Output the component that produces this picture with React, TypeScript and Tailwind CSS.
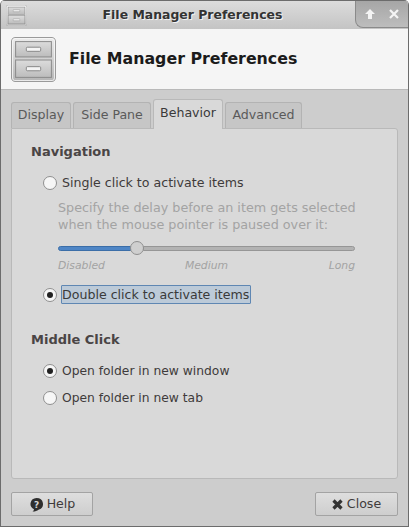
import React from "react";

type CabinetProps = { size: number };

// Filing cabinet icon, same drawing for title bar and header
const Cabinet = ({ size }: CabinetProps): JSX.Element => (
  <svg width={size} height={size} viewBox="0 0 44 44" className="block">
    <defs>
      <linearGradient id="body" x1="0" y1="0" x2="0" y2="1">
        <stop offset="0" stopColor="#ececec" />
        <stop offset="1" stopColor="#b5b5b5" />
      </linearGradient>
      <linearGradient id="drawer" x1="0" y1="0" x2="0" y2="1">
        <stop offset="0" stopColor="#dcdcdc" />
        <stop offset="1" stopColor="#bcbcbc" />
      </linearGradient>
    </defs>
    <rect x="0.5" y="0.5" width="43" height="43" rx="4" fill="url(#body)" stroke="#9a9a9a" />
    <rect x="1.5" y="1.5" width="41" height="41" rx="3" fill="none" stroke="#f8f8f8" strokeOpacity="0.8" />
    <rect x="4.5" y="4.5" width="35" height="15" fill="url(#drawer)" stroke="#8c8c8c" />
    <rect x="4.5" y="22.5" width="35" height="17" fill="url(#drawer)" stroke="#8c8c8c" />
    <rect x="15" y="10" width="14" height="4" rx="1" fill="#f4f4f4" stroke="#777" strokeWidth="0.8" />
    <rect x="15" y="29" width="14" height="4" rx="1" fill="#f4f4f4" stroke="#777" strokeWidth="0.8" />
  </svg>
);

const tabs = [
  { label: "Display", active: false, width: "w-[60px]" },
  { label: "Side Pane", active: false, width: "w-[78px]" },
  { label: "Behavior", active: true, width: "w-[70px]" },
  { label: "Advanced", active: false, width: "w-[77px]" },
];

type RadioProps = {
  label: string;
  checked?: boolean;
  focused?: boolean;
};

const Radio = ({ label, checked, focused }: RadioProps): JSX.Element => (
  <div className="flex h-[19px] items-center">
    <span className="flex h-[14px] w-[14px] items-center justify-center rounded-full border border-[#8f8f8f] bg-[#f6f6f6]">
      {checked && <span className="h-[6px] w-[6px] rounded-full bg-[#222]" />}
    </span>
    {focused ? (
      <span className="ml-[4px] flex h-[19px] items-center rounded-[1px] border border-[#5f87b3] bg-[#bccad8] pr-[1px] pt-px text-[#3a3a3a]">
        {label}
      </span>
    ) : (
      <span className="ml-[5px] pt-px text-[#3f3b3b]">{label}</span>
    )}
  </div>
);

const App = (): JSX.Element => {
  return (
    <div className="flex h-[527px] w-[409px] flex-col overflow-hidden rounded-t-[5px] border-x border-b border-[#6c6c6c] bg-[#cdcdcd] font-['DejaVu_Sans',sans-serif] text-[12.6px]">
      {/* Title bar */}
      <header className="flex h-[29px] shrink-0 items-center border-t border-[#6c6c6c] bg-gradient-to-b from-[#dcdcdc] to-[#c4c4c4]">
        <div className="ml-[5px] shrink-0">
          <Cabinet size={21} />
        </div>
        <h1 className="grow pl-[3px] text-center text-[12.45px] font-bold text-[#333] [text-shadow:1px_1px_0_#f2f2f2]">
          File Manager Preferences
        </h1>
        <div className="flex h-[27px] w-[53px] shrink-0 items-center justify-center gap-[14px] self-start rounded-bl-[8px] border-b border-l border-[#8a8a8a] bg-gradient-to-b from-[#a6a6a6] to-[#bdbdbd]">
          <svg width="10" height="10" viewBox="0 0 10 10" fill="#f4f4f4">
            <path d="M5 0 10 5H7V10H3V5H0Z" />
          </svg>
          <svg width="10" height="10" viewBox="0 0 10 10" stroke="#f4f4f4" strokeWidth="2.2">
            <path d="M1 1 9 9M9 1 1 9" />
          </svg>
        </div>
      </header>

      {/* Dialog header */}
      <div className="flex h-[61px] shrink-0 items-center border-b border-[#b9b9b9] bg-[#f5f5f5] pl-[10px]">
        <Cabinet size={45} />
        <span className="ml-[13px] text-[15.8px] font-bold text-[#1b1b1b]">File Manager Preferences</span>
      </div>

      {/* Notebook */}
      <main className="flex grow flex-col px-[10px] pt-[9px]">
        <div className="relative z-10 flex h-[29px] shrink-0 items-end gap-[2px]">
          {tabs.map((tab) => (
            <div
              key={tab.label}
              className={
                tab.active
                  ? `${tab.width} -mb-px flex h-[30px] items-center justify-center rounded-t-[3px] border-x border-t border-[#b9b9b9] bg-[#d9d9d9] pb-[3px] text-[#3a3a3a]`
                  : `${tab.width} flex h-[26px] items-center justify-center rounded-t-[3px] border-x border-t border-[#b3b3b3] bg-[#c6c6c6] text-[#5a5a5a]`
              }
            >
              {tab.label}
            </div>
          ))}
        </div>
        <section className="h-[351px] rounded-b-[3px] rounded-tr-[3px] border border-[#b9b9b9] bg-[#d9d9d9] pl-[19px] pr-[20px]">
          <h2 className="mt-[13px] h-[19px] text-[13px] font-bold leading-[19px] text-[#4a4545]">Navigation</h2>
          <div className="mt-[12px] pl-[12px]">
            <Radio label="Single click to activate items" />
            <p className="mt-[7px] pl-[15px] text-[12.75px] leading-[17px] text-[#a3a3a3]">
              Specify the delay before an item gets selected
              <br />
              when the mouse pointer is paused over it:
            </p>
            <div className="ml-[15px] mt-[8px] flex h-[14px] w-[297px] items-center">
              <div className="h-[5px] w-[73px] rounded-l-full border border-[#3b6ea8] bg-[#4f86c6]" />
              <div className="z-10 -ml-px h-[14px] w-[14px] shrink-0 rounded-full border border-[#8f8f8f] bg-[#cfcfcf]" />
              <div className="-ml-px h-[5px] grow rounded-r-full border border-[#969696] bg-[#b3b3b3]" />
            </div>
            <div className="ml-[15px] mt-[4px] grid w-[297px] grid-cols-3 text-[10.8px] italic leading-[14px] text-[#a3a3a3]">
              <span>Disabled</span>
              <span className="text-center">Medium</span>
              <span className="text-right">Long</span>
            </div>
            <div className="mt-[12px]">
              <Radio label="Double click to activate items" checked focused />
            </div>
          </div>
          <h2 className="mt-[26px] h-[19px] text-[13px] font-bold leading-[19px] text-[#4a4545]">Middle Click</h2>
          <div className="mt-[12px] flex flex-col gap-[8px] pl-[12px] text-[12.3px]">
            <Radio label="Open folder in new window" checked />
            <Radio label="Open folder in new tab" />
          </div>
        </section>

        {/* Buttons */}
        <footer className="mt-[13px] flex justify-between">
          <button className="flex h-[24px] w-[82px] items-center justify-center gap-[3px] rounded-[2px] border border-[#a3a3a3] bg-gradient-to-b from-[#dedede] to-[#cecece] text-[#3f3b3b]">
            <svg width="15" height="15" viewBox="0 0 15 15">
              <path d="M7.5 1a6.5 6 0 0 1 2 11.700C8 14 5.500 14.700 3.500 14.500c1-.6 1.400-1.300 1.500-2.200A6.500 6 0 0 1 7.500 1Z" fill="#2e2e2e" />
              <text x="7.500" y="10.500" textAnchor="middle" fontSize="9" fontWeight="bold" fill="#d6d6d6" fontFamily="DejaVu Sans">?</text>
            </svg>
            Help
          </button>
          <button className="flex h-[24px] w-[83px] items-center justify-center gap-[4px] rounded-[2px] border border-[#a3a3a3] bg-gradient-to-b from-[#dedede] to-[#cecece] text-[#3f3b3b]">
            <svg width="11" height="11" viewBox="0 0 11 11" stroke="#333" strokeWidth="3.200">
              <path d="M1.500 1.500 9.500 9.500M9.500 1.500 1.500 9.500" />
            </svg>
            Close
          </button>
        </footer>
      </main>
    </div>
  );
};

export default App;
